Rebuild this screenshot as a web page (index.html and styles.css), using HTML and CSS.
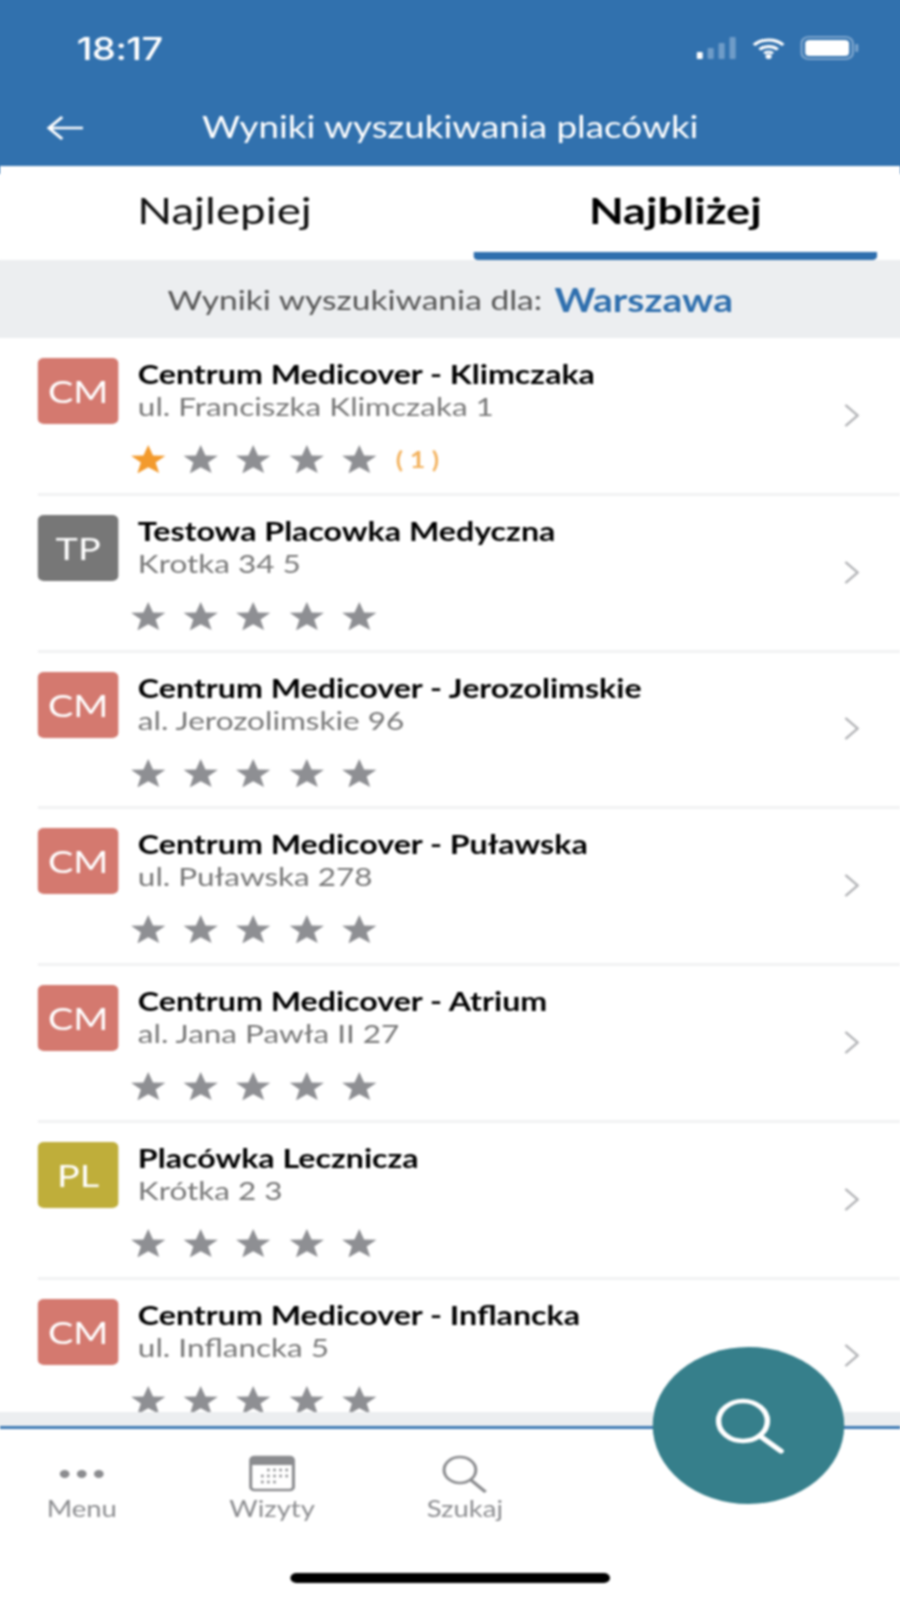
FILE: index.html
```html
<!DOCTYPE html>
<html lang="pl">
<head>
    <meta charset="UTF-8">
    <meta name="viewport" content="width=device-width, initial-scale=1.0">
    <title>Wyniki wyszukiwania placówki</title>
    <link rel="stylesheet" href="styles.css">
</head>
<body>
    <svg class="sprite" aria-hidden="true">
        <symbol id="star" viewBox="0 0 34 28" preserveAspectRatio="none">
            <path d="M17 0l4.600 10.400 11.900.4-9.400 6.800 3.400 10.400L17 22.200 6.500 28.500l3.400-10.900L.5 10.800l11.900-.4z"/>
        </symbol>
        <symbol id="chevron" viewBox="0 0 14 25">
            <path d="M2 2l10 10.500L2 23" fill="none" stroke="currentColor" stroke-width="2"/>
        </symbol>
    </svg>

    <div class="screen">
        <header class="header">
            <div class="status-bar">
                <span class="time">18:17</span>
                <div class="status-icons">
                    <svg class="signal" viewBox="0 0 33 22">
                        <rect x="0" y="15" width="5" height="7" rx="1" fill="#fff"/>
                        <rect x="9" y="11" width="5" height="11" rx="1" fill="#6f9cc8"/>
                        <rect x="18" y="6" width="5" height="16" rx="1" fill="#6f9cc8"/>
                        <rect x="27" y="0" width="5" height="22" rx="1" fill="#6f9cc8"/>
                    </svg>
                    <svg class="wifi" viewBox="0 0 28 22">
                        <path d="M2 8a17 17 0 0 1 24 0M6.500 12.500a11 11 0 0 1 15 0M10.500 16.500a5 5 0 0 1 7 0" fill="none" stroke="#fff" stroke-width="3"/>
                        <circle cx="14" cy="19.500" r="2.500" fill="#fff"/>
                    </svg>
                    <svg class="battery" viewBox="0 0 48 24">
                        <rect x="1" y="1" width="42" height="22" rx="6" fill="none" stroke="#7ca5cd" stroke-width="2"/>
                        <rect x="4" y="4" width="36" height="16" rx="3.500" fill="#fff"/>
                        <rect x="45" y="8" width="2.500" height="8" rx="1" fill="#7ca5cd"/>
                    </svg>
                </div>
            </div>
            <div class="nav-bar">
                <svg class="back" viewBox="0 0 31 26">
                    <path d="M30 13H2M13 2L2 13l11 11" fill="none" stroke="#fff" stroke-width="2.500"/>
                </svg>
                <span class="nav-title">Wyniki wyszukiwania placówki</span>
            </div>
        </header>

        <nav class="tabs">
            <a class="tab">Najlepiej</a>
            <a class="tab active">Najbliżej</a>
        </nav>

        <div class="search-for">Wyniki wyszukiwania dla: <b>Warszawa</b></div>

        <div class="list">
            <div class="row">
                <div class="badge red">CM</div>
                <div class="info">
                    <div class="name">Centrum Medicover - Klimczaka</div>
                    <div class="address">ul. Franciszka Klimczaka 1</div>
                    <div class="stars">
                        <svg class="star on"><use href="#star"/></svg>
                        <svg class="star"><use href="#star"/></svg>
                        <svg class="star"><use href="#star"/></svg>
                        <svg class="star"><use href="#star"/></svg>
                        <svg class="star"><use href="#star"/></svg>
                        <span class="count">( 1 )</span>
                    </div>
                </div>
                <svg class="chevron"><use href="#chevron"/></svg>
            </div>
            <div class="row">
                <div class="badge grey">TP</div>
                <div class="info">
                    <div class="name">Testowa Placowka Medyczna</div>
                    <div class="address">Krotka 34 5</div>
                    <div class="stars">
                        <svg class="star"><use href="#star"/></svg>
                        <svg class="star"><use href="#star"/></svg>
                        <svg class="star"><use href="#star"/></svg>
                        <svg class="star"><use href="#star"/></svg>
                        <svg class="star"><use href="#star"/></svg>
                    </div>
                </div>
                <svg class="chevron"><use href="#chevron"/></svg>
            </div>
            <div class="row">
                <div class="badge red">CM</div>
                <div class="info">
                    <div class="name">Centrum Medicover - Jerozolimskie</div>
                    <div class="address">al. Jerozolimskie 96</div>
                    <div class="stars">
                        <svg class="star"><use href="#star"/></svg>
                        <svg class="star"><use href="#star"/></svg>
                        <svg class="star"><use href="#star"/></svg>
                        <svg class="star"><use href="#star"/></svg>
                        <svg class="star"><use href="#star"/></svg>
                    </div>
                </div>
                <svg class="chevron"><use href="#chevron"/></svg>
            </div>
            <div class="row">
                <div class="badge red">CM</div>
                <div class="info">
                    <div class="name">Centrum Medicover - Puławska</div>
                    <div class="address">ul. Puławska 278</div>
                    <div class="stars">
                        <svg class="star"><use href="#star"/></svg>
                        <svg class="star"><use href="#star"/></svg>
                        <svg class="star"><use href="#star"/></svg>
                        <svg class="star"><use href="#star"/></svg>
                        <svg class="star"><use href="#star"/></svg>
                    </div>
                </div>
                <svg class="chevron"><use href="#chevron"/></svg>
            </div>
            <div class="row">
                <div class="badge red">CM</div>
                <div class="info">
                    <div class="name">Centrum Medicover - Atrium</div>
                    <div class="address">al. Jana Pawła II 27</div>
                    <div class="stars">
                        <svg class="star"><use href="#star"/></svg>
                        <svg class="star"><use href="#star"/></svg>
                        <svg class="star"><use href="#star"/></svg>
                        <svg class="star"><use href="#star"/></svg>
                        <svg class="star"><use href="#star"/></svg>
                    </div>
                </div>
                <svg class="chevron"><use href="#chevron"/></svg>
            </div>
            <div class="row">
                <div class="badge olive">PL</div>
                <div class="info">
                    <div class="name">Placówka Lecznicza</div>
                    <div class="address">Krótka 2 3</div>
                    <div class="stars">
                        <svg class="star"><use href="#star"/></svg>
                        <svg class="star"><use href="#star"/></svg>
                        <svg class="star"><use href="#star"/></svg>
                        <svg class="star"><use href="#star"/></svg>
                        <svg class="star"><use href="#star"/></svg>
                    </div>
                </div>
                <svg class="chevron"><use href="#chevron"/></svg>
            </div>
            <div class="row">
                <div class="badge red">CM</div>
                <div class="info">
                    <div class="name">Centrum Medicover - Inflancka</div>
                    <div class="address">ul. Inflancka 5</div>
                    <div class="stars">
                        <svg class="star"><use href="#star"/></svg>
                        <svg class="star"><use href="#star"/></svg>
                        <svg class="star"><use href="#star"/></svg>
                        <svg class="star"><use href="#star"/></svg>
                        <svg class="star"><use href="#star"/></svg>
                    </div>
                </div>
                <svg class="chevron"><use href="#chevron"/></svg>
            </div>
        </div>

        <div class="list-end"></div>

        <footer class="tabbar">
            <div class="tabbar-items">
                <a class="tabbar-item">
                    <svg class="tabbar-icon" viewBox="0 0 38 38">
                        <circle cx="5" cy="19" r="4" fill="#8b8c8f"/>
                        <circle cx="19" cy="19" r="4" fill="#8b8c8f"/>
                        <circle cx="33" cy="19" r="4" fill="#8b8c8f"/>
                    </svg>
                    <span>Menu</span>
                </a>
                <a class="tabbar-item">
                    <svg class="tabbar-icon" viewBox="0 0 38 38">
                        <rect x="1.500" y="2" width="35" height="33" rx="3" fill="none" stroke="#8b8c8f" stroke-width="2.500"/>
                        <path d="M1.500 5a3 3 0 0 1 3-3h29a3 3 0 0 1 3 3v5h-35z" fill="#8b8c8f"/>
                        <path d="M15 15h2M20 15h2M25 15h2M30 15h2M10 21h2M15 21h2M20 21h2M25 21h2M30 21h2M10 27h2M15 27h2M20 27h2" stroke="#8b8c8f" stroke-width="2.500"/>
                    </svg>
                    <span>Wizyty</span>
                </a>
                <a class="tabbar-item">
                    <svg class="tabbar-icon" viewBox="0 0 38 38">
                        <circle cx="15" cy="15" r="13" fill="none" stroke="#8b8c8f" stroke-width="2.500"/>
                        <path d="M24 25l12 12" stroke="#8b8c8f" stroke-width="3"/>
                    </svg>
                    <span>Szukaj</span>
                </a>
            </div>
            <div class="home-bar"></div>
        </footer>

        <a class="fab">
            <svg viewBox="0 0 58 58">
                <circle cx="24" cy="24" r="20" fill="none" stroke="#fff" stroke-width="4.500"/>
                <path d="M38 39l17 15" stroke="#fff" stroke-width="5" stroke-linecap="round"/>
            </svg>
        </a>
    </div>
</body>
</html>
```

FILE: styles.css
```css
/* the capture is stretched sideways, so the whole screen is laid out
   at 738px and widened to 900px */
html, body {
    margin: 0;
    padding: 0;
    background-color: #fff;
}
body {
    width: 900px;
    height: 1598px;
    overflow: hidden;
    font-family: "Lato", "Open Sans", sans-serif;
}
.sprite {
    width: 0;
    height: 0;
    position: absolute;
}
.screen {
    position: relative;
    width: 738px;
    height: 1598px;
    display: flex;
    flex-direction: column;
    transform: scaleX(1.22);
    transform-origin: 0 0;
    filter: blur(0.8px);
}

/* header, its shadow keeps the blur from fading the edges */
.header {
    height: 166px;
    background-color: #3171ae;
    box-shadow: 0 0 0 8px #3171ae;
    color: #fff;
    flex-shrink: 0;
}
.status-bar {
    display: flex;
    justify-content: space-between;
    align-items: center;
    height: 96px;
    padding: 0 34px 0 63px;
}
.time {
    font-family: "Inter", sans-serif;
    font-size: 31px;
    font-weight: 500;
    letter-spacing: -0.4px;
}
.status-icons {
    display: flex;
    align-items: center;
}
.signal { width: 33px; height: 22px; margin-right: 12px; }
.wifi { width: 28px; height: 22px; margin-right: 12px; }
.battery { width: 48px; height: 24px; }
.nav-bar {
    position: relative;
    display: flex;
    justify-content: center;
    align-items: center;
    height: 60px;
}
.back {
    position: absolute;
    left: 38px;
    top: 19px;
    width: 31px;
    height: 26px;
}
.nav-title { font-size: 30.2px; }

/* tabs */
.tabs {
    display: grid;
    grid-template-columns: 368px 331px;
    column-gap: 20px;
    height: 94px;
    flex-shrink: 0;
    background-color: #fff;
}
.tab {
    display: flex;
    justify-content: center;
    align-items: center;
    padding-bottom: 8px;
    font-size: 37.5px;
    color: #111;
}
.tab.active {
    font-weight: 700;
    font-size: 37px;
    color: #000;
    border-bottom: 8px solid #2f6fae;
    border-radius: 0 0 4px 4px;
    padding-bottom: 0;
}

.search-for {
    height: 78px;
    flex-shrink: 0;
    display: flex;
    justify-content: center;
    align-items: center;
    gap: 10px;
    background-color: #eceef0;
    box-shadow: -8px 0 0 #eceef0, 8px 0 0 #eceef0;
    font-size: 27.5px;
    color: #555;
}
.search-for b {
    font-size: 32px;
    color: #2f6fae;
}

/* result list */
.list {
    flex: 1;
    overflow: hidden;
    padding-top: 1px;
}
.row {
    display: flex;
    align-items: flex-start;
    height: 156.75px;
    box-sizing: border-box;
    margin-left: 31px;
    padding-top: 19px;
    border-bottom: 3px solid #f1f2f3;
}
.badge {
    width: 66px;
    height: 66px;
    flex-shrink: 0;
    display: flex;
    justify-content: center;
    align-items: center;
    border-radius: 5px;
    font-size: 31px;
    color: #fff;
}
.red { background-color: #d4796f; }
.grey { background-color: #777; }
.olive { background-color: #bfae3a; }
.info {
    flex: 1;
    margin-left: 16px;
}
.name {
    font-size: 26.35px;
    font-weight: 700;
    line-height: 32px;
    color: #000;
}
.address {
    font-size: 25.8px;
    line-height: 32px;
    color: #777;
}
.stars {
    display: flex;
    align-items: center;
    gap: 14.4px;
    height: 28px;
    margin: 23px 0 0 -6.5px;
}
.star {
    width: 29px;
    height: 28px;
    fill: #8e8f93;
}
.star.on { fill: #f39a2c; }
.count {
    font-size: 22px;
    font-weight: 700;
    color: #f3b25e;
    margin-left: 1px;
}
.chevron {
    align-self: center;
    width: 14px;
    height: 25px;
    margin-right: 33px;
    color: #b0b1b4;
    position: relative;
    top: -10px;
}
.list-end {
    height: 14px;
    flex-shrink: 0;
    background-color: #eceef0;
    border-bottom: 3px solid #3e7ab4;
    box-shadow: -8px 0 0 #eceef0, 8px 0 0 #eceef0;
}

/* bottom bar */
.tabbar {
    height: 169px;
    flex-shrink: 0;
    background-color: #fff;
    display: flex;
    flex-direction: column;
}
.tabbar-items {
    display: grid;
    grid-template-columns: 134px 178px 138px;
    padding-top: 26px;
}
.tabbar-item {
    display: flex;
    flex-direction: column;
    align-items: center;
    font-size: 22.5px;
    line-height: 27px;
    color: #8b8c8f;
}
.tabbar-icon {
    width: 38px;
    height: 38px;
    margin-bottom: 2px;
}
.home-bar {
    width: 262px;
    height: 10px;
    margin: auto auto 15px;
    border-radius: 5px;
    background-color: #000;
}
.fab {
    position: absolute;
    left: 535px;
    top: 1347px;
    width: 157px;
    height: 157px;
    border-radius: 50%;
    background-color: #367f8b;
    display: flex;
    justify-content: center;
    align-items: center;
}
.fab svg {
    width: 58px;
    height: 58px;
}
```
